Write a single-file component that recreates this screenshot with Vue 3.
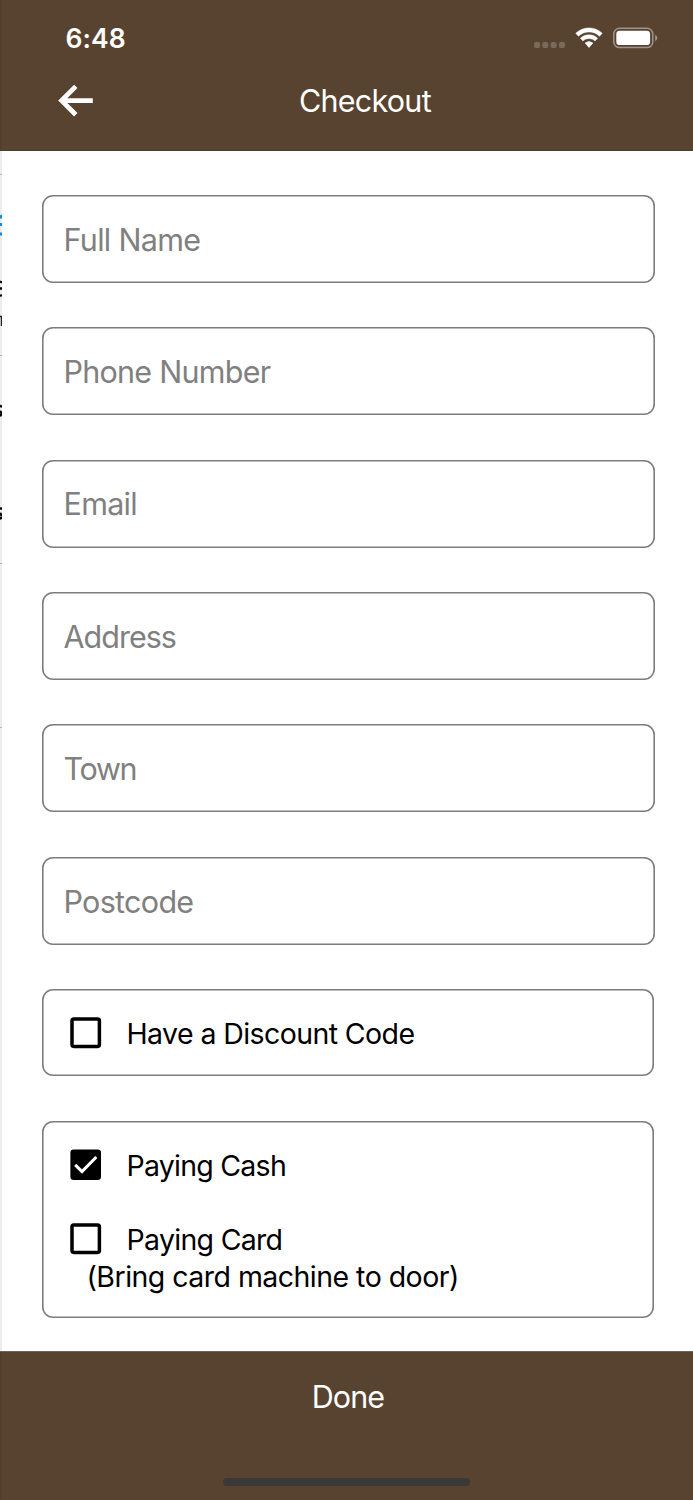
<script setup>
const fields = [
  { name: 'Full Name', cls: 'f-name' },
  { name: 'Phone Number', cls: 'f-phone' },
  { name: 'Email', cls: 'f-email' },
  { name: 'Address', cls: 'f-address' },
  { name: 'Town', cls: 'f-town' },
  { name: 'Postcode', cls: 'f-postcode' },
]
</script>

<template>
  <div class="screen">
    <header class="top">
      <div class="status">
        <span class="time">6:48</span>
        <svg class="indicators" width="126" height="24" viewBox="0 0 126 24">
          <g fill="#7b6a5c">
            <rect x="1" y="15" width="6" height="6" rx="2" />
            <rect x="9.3" y="15" width="6" height="6" rx="2" />
            <rect x="17.6" y="15" width="6" height="6" rx="2" />
            <rect x="26" y="15" width="6" height="6" rx="2" />
          </g>
          <g fill="#fff">
            <path d="M42.8 6.2C50.3-.8 61.7-.8 69.2 6.2L66.6 9.2C60.6 3.5 51.4 3.5 45.4 9.2Z" stroke="#fff" stroke-width=".5" stroke-linejoin="round" />
            <path d="M47.4 11.2C52.2 6.7 59.8 6.7 64.6 11.2L62 13.9C58.6 10.8 53.4 10.8 50 13.9Z" stroke="#fff" stroke-width=".5" stroke-linejoin="round" />
            <path d="M52.2 16Q56 13 59.8 16L56 20.4Z" stroke="#fff" stroke-width=".7" stroke-linejoin="round" />
          </g>
          <rect x="80.8" y="1.3" width="39" height="19.3" rx="5.7" fill="none" stroke="#a0948a" stroke-width="1.5" />
          <rect x="83.3" y="3.7" width="33.8" height="14.4" rx="3.4" fill="#fff" />
          <path d="M122.2 7.8Q124.4 9 124.4 11T122.2 14.2Z" fill="#a0948a" />
        </svg>
      </div>
      <div class="nav">
        <svg class="back" width="36" height="34" viewBox="0 0 36 34">
          <path d="M17.8 2.4 3.6 16.6 17.8 30.8M3.5 16.6H34.8" fill="none" stroke="#fff" stroke-width="4.8" />
        </svg>
        <span class="title">Checkout</span>
      </div>
    </header>

    <main class="form">
      <label v-for="f in fields" :key="f.name" class="box field">
        <span :class="f.cls">{{ f.name }}</span>
      </label>

      <div class="box single">
        <div class="check">
          <svg width="32" height="32" viewBox="0 0 32 32"><rect x="2" y="2" width="27.4" height="27.4" rx="1.8" fill="none" stroke="#000" stroke-width="3.5" /></svg>
          <span class="c-discount">Have a Discount Code</span>
        </div>
      </div>

      <div class="box payment">
        <div class="check">
          <svg width="32" height="32" viewBox="0 0 32 32">
            <rect x=".4" y=".4" width="30.6" height="30.6" rx="3.2" />
            <path d="M5.2 15.8 12 22.5 26.3 8" fill="none" stroke="#fff" stroke-width="3.1" />
          </svg>
          <span class="c-cash">Paying Cash</span>
        </div>
        <div class="check card">
          <svg width="32" height="32" viewBox="0 0 32 32"><rect x="2" y="2" width="27.4" height="27.4" rx="1.8" fill="none" stroke="#000" stroke-width="3.5" /></svg>
          <span class="c-card">Paying Card</span>
        </div>
        <div class="note"><span class="c-note">(Bring card machine to door)</span></div>
      </div>
    </main>

    <footer class="bottom">
      <span class="done">Done</span>
      <i class="home"></i>
    </footer>

    <svg class="previous" width="2" height="1200" viewBox="0 0 2 1200">
      <rect width="2" height="1200" fill="#ececec" />
      <path d="M0 23.5H2M0 204.5H2M0 412.5H2M0 576.5H2" stroke="#b5b5b5" />
      <path d="M0 64.5 2 67M0 73.5H2M0 84 2 82" stroke="#078bea" stroke-width="3" />
      <path d="M0 130.5 2 131.5M0 137.5H2M0 145 2 144" stroke="#000" stroke-width="2.4" />
      <path d="M0 165.5H1.5V175" stroke="#222" stroke-width="1.5" fill="none" />
      <path d="M0 254.5 2 256M0 260 2 263M0 265 2 263M0 357 2 358M0 362 2 365M0 368 2 366" stroke="#000" stroke-width="2.5" />
    </svg>
  </div>
</template>

<style>
body { margin: 0; background: #fff; }
</style>

<style scoped>
.screen {
  position: relative;
  width: 693px;
  height: 1500px;
  overflow: hidden;
  display: flex;
  flex-direction: column;
  background: #fff;
  font-family: Inter, "Liberation Sans", sans-serif;
  color: #000;
}
.top {
  height: 151px;
  flex: none;
  background: #584330;
  color: #fff;
  box-shadow: inset 0 -1px #503b2b, inset 2px 0 #523e2d;
}
.status {
  display: flex;
  justify-content: space-between;
  align-items: flex-start;
  padding: 27px 34px 0 65.5px;
  height: 51px;
  box-sizing: border-box;
}
.time { font-size: 26.5px; font-weight: 600; line-height: 24px; letter-spacing: 0.1px; margin-top: -1px; }
.nav {
  display: grid;
  grid-template-columns: 299px 1fr;
  align-items: start;
  height: 100px;
  padding-top: 33px;
  box-sizing: border-box;
}
.nav .back { margin: 0 0 0 58px; }
.title { font-size: 30.5px; line-height: 34px; letter-spacing: -0.75px; }
.form {
  flex: none;
  height: 1200px;
  box-sizing: border-box;
  padding: 44px 38px 0 41.5px;
  display: flex;
  flex-direction: column;
  gap: 44.35px;
}
.box {
  box-sizing: border-box;
  border-radius: 11px;
  box-shadow: inset 0 0 0 1.6px #7d7d7d;
  flex: none;
}
.field {
  height: 88px;
  display: flex;
  align-items: center;
  padding-left: 22px;
  font-size: 30.5px;
  color: #808080;
}
.f-name { letter-spacing: -0.68px; }
.f-phone { letter-spacing: -0.74px; }
.f-email { letter-spacing: -0.7px; }
.f-address { letter-spacing: -0.98px; }
.f-town { letter-spacing: -1.3px; }
.f-postcode { letter-spacing: -0.7px; padding-top: 2px; }
.c-discount { letter-spacing: -0.59px; }
.c-cash { letter-spacing: -0.75px; }
.c-card { letter-spacing: -0.7px; }
.c-note { letter-spacing: -0.53px; }
.single { height: 87px; margin: 0 1px 1px 0; padding-top: 28px; }
.payment { height: 197px; margin-right: 1px; padding-top: 28px; }
.check {
  display: flex;
  align-items: center;
  gap: 25px;
  height: 32px;
  padding-left: 28px;
  font-size: 28.5px;
}
.check svg { display: block; }
.card { margin-top: 42px; }
.note { padding-left: 45px; font-size: 28.5px; line-height: 34px; margin-top: 5px; }
.bottom {
  flex: 1;
  display: flex;
  flex-direction: column;
  align-items: center;
  background: #584330;
  color: #fff;
  box-shadow: inset 0 1px #6f6257, inset 2px 0 #523e2d;
}
.done { font-size: 30.5px; line-height: 36px; margin-top: 28px; padding-left: 3px; letter-spacing: -0.9px; }
.home { width: 247px; height: 8px; border-radius: 4px; background: #3b3937; margin-top: 63px; }
.previous { position: absolute; left: 0; top: 151px; }
</style>
